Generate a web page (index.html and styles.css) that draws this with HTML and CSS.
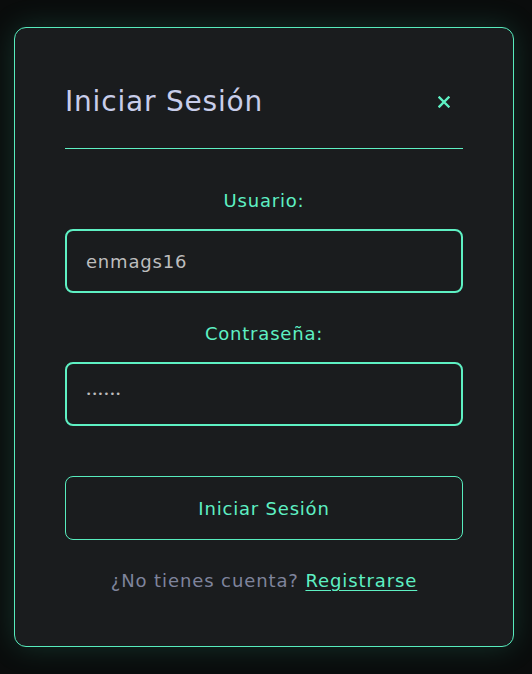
FILE: index.html
```html
<!DOCTYPE html>
<html lang="es">
<head>
<meta charset="utf-8">
<title>Iniciar Sesión</title>
<link rel="stylesheet" href="styles.css">
</head>
<body>
<div class="card">
  <div class="header">
    <h2 class="title">Iniciar Sesión</h2>
    <button class="close" aria-label="Cerrar">
      <svg width="12" height="12" viewBox="0 0 12 12"><path d="M1.5 1.5L10.5 10.5M10.5 1.5L1.5 10.5" stroke="#5ef0c3" stroke-width="2.4" stroke-linecap="square"/></svg>
    </button>
  </div>
  <div class="divider"></div>
  <form class="form">
    <label class="label" for="user">Usuario:</label>
    <input class="input" id="user" type="text" value="enmags16">
    <label class="label second" for="pass">Contraseña:</label>
    <input class="input pass" id="pass" type="password" value="123456">
    <button class="submit" type="button">Iniciar Sesión</button>
  </form>
  <p class="footer">¿No tienes cuenta? <a href="#" class="link">Registrarse</a></p>
</div>
</body>
</html>
```
FILE: styles.css
```css
html, body {
  margin: 0;
  padding: 0;
  background: #0a0c0c;
  height: 674px;
  overflow: hidden;
  font-family: "DejaVu Sans", "Open Sans", sans-serif;
}
body {
  padding: 27px 18px 0 14px;
  box-sizing: border-box;
}
.card {
  width: 500px;
  height: 620px;
  box-sizing: border-box;
  background: #1a1c1e;
  border: 1px solid #57ecbd;
  border-radius: 12px;
  padding: 50px 50px 0 50px;
  box-shadow: 0 0 30px rgba(60, 200, 160, 0.2);
}
.header {
  display: flex;
  justify-content: space-between;
  align-items: center;
  height: 70px;
  box-sizing: border-box;
  padding-bottom: 22px;
}
.divider {
  height: 1px;
  background: #5ef0c3;
}
.title {
  margin: 0;
  font-size: 28px;
  font-weight: 400;
  color: #c8cdea;
  letter-spacing: 0.8px;
  line-height: 44px;
}
.close {
  background: none;
  border: none;
  padding: 0;
  margin-right: 13px;
  width: 12px;
  height: 12px;
  display: flex;
}
.form {
  display: flex;
  flex-direction: column;
  margin-top: 40px;
}
.label {
  text-align: center;
  color: #5ef0c3;
  font-size: 18px;
  line-height: 24px;
  letter-spacing: 0.8px;
  margin-bottom: 16px;
}
.label.second {
  margin-top: 29px;
  margin-bottom: 16px;
}
.input {
  height: 64px;
  box-sizing: border-box;
  border: 2px solid #5ef0c3;
  border-radius: 8px;
  background: #1a1c1e;
  color: #bdbdbd;
  font-family: inherit;
  font-size: 18px;
  letter-spacing: 0.8px;
  padding: 0 19px;
  outline: none;
}
.input.pass {
  font-size: 9px;
  letter-spacing: 0.6px;
}
.submit {
  margin-top: 50px;
  height: 64px;
  border: 1px solid #57ecbd;
  border-radius: 8px;
  background: transparent;
  color: #5ef0c3;
  font-family: inherit;
  font-size: 18px;
  letter-spacing: 0.8px;
}
.footer {
  margin: 29px 0 0;
  text-align: center;
  color: #7f849c;
  font-size: 18px;
  line-height: 24px;
  letter-spacing: 0.9px;
}
.link {
  color: #5ef0c3;
  text-decoration: underline;
  text-underline-offset: 3px;
}
```
